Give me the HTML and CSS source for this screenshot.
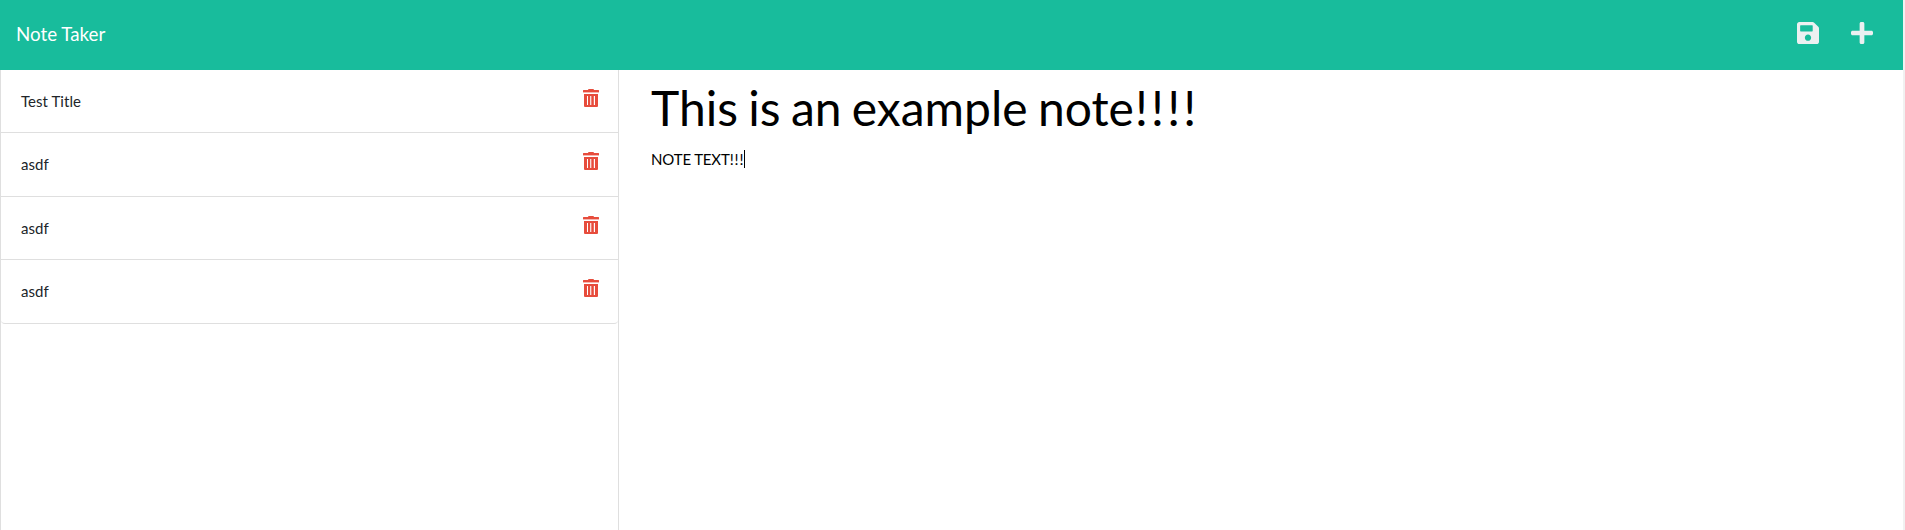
FILE: index.html
```html
<!DOCTYPE html>
<html lang="en">
<head>
<meta charset="utf-8">
<title>Note Taker</title>
<link rel="stylesheet" href="styles.css">
</head>
<body>
<svg class="sprite" aria-hidden="true">
  <symbol id="trash" viewBox="0 0 16 18">
    <path fill-rule="evenodd" d="M5 1Q5 0 6 0H10Q11 0 11 1H15.5Q16 1 16 1.5V3H0V1.5Q0 1 .5 1ZM1 5H15V17Q15 18 14 18H2Q1 18 1 17ZM4 7V16H5V7ZM7.2 7V16H8.3V7ZM10.8 7V16H12V7Z"/>
    <path d="M0 3H16V4H0Z" opacity=".4"/>
  </symbol>
</svg>
<div class="app">
  <nav class="navbar">
    <a class="brand">Note Taker</a>
    <div class="actions">
      <svg class="action-icon" viewBox="0 32 448 448"><path d="M433.941 129.941l-83.882-83.882A48 48 0 0 0 316.118 32H48C21.490 32 0 53.490 0 80v352c0 26.510 21.490 48 48 48h352c26.510 0 48-21.490 48-48V163.882a48 48 0 0 0-14.059-33.941zM224 416c-35.346 0-64-28.654-64-64s28.654-64 64-64 64 28.654 64 64-28.654 64-64 64zm96-304.520V212c0 6.627-5.373 12-12 12H76c-6.627 0-12-5.373-12-12V108c0-6.627 5.373-12 12-12h228.520c3.183 0 6.235 1.264 8.485 3.515l3.480 3.480A11.996 11.996 0 0 1 320 111.480z"/></svg>
      <svg class="action-icon" viewBox="0 32 448 448"><path d="M416 208H272V64c0-17.670-14.330-32-32-32h-32c-17.670 0-32 14.330-32 32v144H32c-17.670 0-32 14.330-32 32v32c0 17.670 14.330 32 32 32h144v144c0 17.670 14.330 32 32 32h32c17.670 0 32-14.330 32-32V304h144c17.670 0 32-14.330 32-32v-32c0-17.670-14.330-32-32-32z"/></svg>
    </div>
  </nav>
  <main class="content">
    <aside class="sidebar">
      <ul class="notes">
        <li class="note"><span>Test Title</span><svg class="trash"><use href="#trash"/></svg></li>
        <li class="note"><span>asdf</span><svg class="trash"><use href="#trash"/></svg></li>
        <li class="note"><span>asdf</span><svg class="trash"><use href="#trash"/></svg></li>
        <li class="note"><span>asdf</span><svg class="trash"><use href="#trash"/></svg></li>
      </ul>
    </aside>
    <section class="editor">
      <div class="note-title">This is an example note<span class="marks">!!!!</span></div>
      <div class="note-text">NOTE TEXT<span class="text-marks">!!!</span><span class="caret"></span></div>
    </section>
  </main>
</div>
</body>
</html>
```
FILE: styles.css
```css
* { box-sizing: border-box; }
body {
  margin: 0;
  height: 530px;
  overflow: hidden;
  background: #f1f1f1;
  color: #212529;
  font: 15px/22.5px Lato, sans-serif;
}
.sprite { display: none; }
.app {
  display: flex;
  flex-direction: column;
  height: 100%;
  margin-right: 2px;
  background: #fff;
}
.navbar {
  display: flex;
  justify-content: space-between;
  align-items: flex-start;
  height: 69.7px;
  padding: 20px 30px 0 16px;
  background: #18bc9c;
}
.brand { color: #fff; font-size: 18.75px; line-height: 28px; }
.actions { display: flex; gap: 32px; padding-top: 2px; }
.action-icon { width: 22px; height: 22px; fill: #ecf0f1; }
.content { display: flex; flex: 1; }
.sidebar {
  width: 619px;
  border: solid #dfdfdf;
  border-width: 0 1px;
}
.notes { margin: 0; padding: 0; list-style: none; }
.note {
  display: flex;
  justify-content: space-between;
  align-items: flex-start;
  height: 63.5px;
  padding: 20px 19px 0 20px;
  border-bottom: 1px solid #dfdfdf;
  letter-spacing: .05px;
}
.note:last-child { border-radius: 0 0 4px 4px; }
.trash { width: 16px; height: 18px; margin-top: -1px; fill: #e74c3c; }
.editor { padding: 2px 0 0 32px; color: #000; }
.note-title {
  font-size: 48px;
  line-height: 72px;
  word-spacing: -2px;
  white-space: nowrap;
}
.marks { margin-left: 1px; letter-spacing: 3.2px; }
.note-text { display: flex; margin-top: 4px; letter-spacing: -.15px; }
.text-marks { letter-spacing: .9px; }
.caret { width: 1px; height: 18px; margin-top: 2px; background: #000; }
```
